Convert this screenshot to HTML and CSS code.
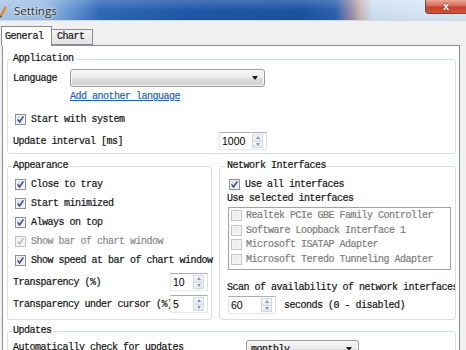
FILE: index.html
```html
<!DOCTYPE html>
<html>
<head>
<meta charset="utf-8">
<title>Settings</title>
<link rel="stylesheet" href="styles.css">
</head>
<body>
<div class="titlebar">
  <svg class="appicon" width="7" height="14" viewBox="0 0 7 14"><path d="M0 11 L4.5 2 L7 3.2 L2.2 12.5 Z" fill="#e58a2a"/><path d="M0 11 L2.2 12.5 L0 14 Z" fill="#5b5b5b"/></svg>
  <span class="title">Settings</span>
  <div class="close">x</div>
</div>
<div class="tabs">
  <div class="tab active">General</div>
  <div class="tab">Chart</div>
</div>
<div class="panel">
  <fieldset class="group app">
    <legend>Application</legend>
    <div class="row lang">
      <span class="lbl-lang">Language</span>
      <div class="combo lang-combo"><span class="arrow"></span></div>
    </div>
    <a class="link">Add another language</a>
    <div class="check start"><span class="cb"><svg width="9" height="9" viewBox="0 0 9 9"><path d="M1.6 4.4 L3.6 7 L7.4 1.4" fill="none" stroke="#34498c" stroke-width="1.5"/></svg></span>Start with system</div>
    <div class="row interval">
      <span class="lbl-interval">Update interval [ms]</span>
      <div class="spin w48"><span class="val">1000</span><span class="btns"><span class="up"></span><span class="dn"></span></span></div>
    </div>
  </fieldset>
  <div class="cols">
    <fieldset class="group appear">
      <legend>Appearance</legend>
      <div class="checks">
        <div class="check tall"><span class="cb"><svg width="9" height="9" viewBox="0 0 9 9"><path d="M1.6 4.4 L3.6 7 L7.4 1.4" fill="none" stroke="#34498c" stroke-width="1.5"/></svg></span>Close to tray</div>
        <div class="check tall"><span class="cb"><svg width="9" height="9" viewBox="0 0 9 9"><path d="M1.6 4.4 L3.6 7 L7.4 1.4" fill="none" stroke="#34498c" stroke-width="1.5"/></svg></span>Start minimized</div>
        <div class="check tall"><span class="cb"><svg width="9" height="9" viewBox="0 0 9 9"><path d="M1.6 4.4 L3.6 7 L7.4 1.4" fill="none" stroke="#34498c" stroke-width="1.5"/></svg></span>Always on top</div>
        <div class="check tall disabled"><span class="cb"><svg width="9" height="9" viewBox="0 0 9 9"><path d="M1.6 4.4 L3.6 7 L7.4 1.4" fill="none" stroke="#b4b4b4" stroke-width="1.3"/></svg></span>Show bar of chart window</div>
        <div class="check tall"><span class="cb"><svg width="9" height="9" viewBox="0 0 9 9"><path d="M1.6 4.4 L3.6 7 L7.4 1.4" fill="none" stroke="#34498c" stroke-width="1.5"/></svg></span>Show speed at bar of chart window</div>
      </div>
      <div class="row trans first">
        <span class="lbl-trans">Transparency (%)</span>
        <div class="spin w38"><span class="val">10</span><span class="btns"><span class="up"></span><span class="dn"></span></span></div>
      </div>
      <div class="row trans second">
        <span class="lbl-trans">Transparency under cursor (%)</span>
        <div class="spin w38"><span class="val">5</span><span class="btns"><span class="up"></span><span class="dn"></span></span></div>
      </div>
    </fieldset>
    <fieldset class="group net">
      <legend>Network Interfaces</legend>
      <div class="check all"><span class="cb"><svg width="9" height="9" viewBox="0 0 9 9"><path d="M1.6 4.4 L3.6 7 L7.4 1.4" fill="none" stroke="#34498c" stroke-width="1.5"/></svg></span>Use all interfaces</div>
      <div class="plain sel">Use selected interfaces</div>
      <div class="listbox">
        <div class="item"><span class="cb off"></span>Realtek PCIe GBE Family Controller</div>
        <div class="item"><span class="cb off"></span>Software Loopback Interface 1</div>
        <div class="item"><span class="cb off"></span>Microsoft ISATAP Adapter</div>
        <div class="item"><span class="cb off"></span>Microsoft Teredo Tunneling Adapter</div>
      </div>
      <div class="plain scan">Scan of availability of network interfaces</div>
      <div class="row secs">
        <div class="spin w48"><span class="val">60</span><span class="btns"><span class="up"></span><span class="dn"></span></span></div>
        <span class="lbl-secs">seconds (0 - disabled)</span>
      </div>
    </fieldset>
  </div>
  <fieldset class="group updates">
    <legend>Updates</legend>
    <div class="row upd">
      <span class="lbl-upd">Automatically check for updates</span>
      <div class="combo upd-combo"><span class="cval">monthly</span><span class="arrow"></span></div>
    </div>
  </fieldset>
</div>
</body>
</html>
```

FILE: styles.css
```css
html, body {
  margin: 0;
  padding: 0;
}
body {
  width: 466px;
  height: 350px;
  overflow: hidden;
  background: #f0f0f0;
  font-family: "Liberation Mono", "DejaVu Sans Mono", monospace;
  font-size: 10px;
  letter-spacing: -0.5px;
  color: #141414;
  -webkit-text-stroke: 0.2px #141414;
}

/* title bar */
.titlebar {
  height: 20px;
  display: flex;
  align-items: center;
  border-bottom: 1px solid #cfdbe8;
  background:
    linear-gradient(to bottom, rgba(255,255,255,0.18), rgba(255,255,255,0) 55%, rgba(0,0,0,0.04)),
    linear-gradient(to right, #a9c7e8 0, #9cbee4 40px, #6a9bd4 68px, #3069b8 100px, #1f57a7 190px, #1c52a2 300px, #2a60ad 335px, #9c8ea6 352px, #c7b7b5 360px, #cfdff1 372px, #d6e6f5 420px, #dbe8f5 466px);
}
.appicon {
  flex: none;
  display: block;
  margin-top: 2px;
}
.title {
  margin-left: 7px;
  font-family: "Open Sans", "Liberation Sans", sans-serif;
  font-size: 11.5px;
  letter-spacing: 0;
  color: #2a2a2a;
  -webkit-text-stroke: 0;
  text-shadow: 0 0 5px rgba(255,255,255,0.95), 0 0 2px rgba(255,255,255,0.9);
}
.close {
  margin-left: auto;
  align-self: flex-start;
  width: 41px;
  height: 14px;
  box-sizing: border-box;
  border: 1px solid #8a3a2e;
  border-top: 0;
  border-right: 0;
  border-radius: 0 0 0 4px;
  background: linear-gradient(#eaa898, #d86a56 45%, #c4412c 55%, #cf573f);
  color: #fff;
  font-family: "Liberation Sans", sans-serif;
  font-weight: bold;
  font-size: 11px;
  letter-spacing: 0;
  -webkit-text-stroke: 0;
  line-height: 12px;
  text-align: center;
  text-shadow: 0 0 2px #7a2418;
}

/* tabs */
.tabs {
  display: flex;
  align-items: flex-end;
  height: 19px;
  margin-top: 5px;
  padding-left: 1px;
}
.tab {
  box-sizing: border-box;
  height: 16px;
  width: 41px;
  padding-left: 5px;
  line-height: 14px;
  border: 1px solid #898c95;
  border-left: 0;
  background: linear-gradient(#f3f3f3, #e4e4e4);
}
.tab.active {
  position: relative;
  z-index: 2;
  height: 20px;
  width: 51px;
  padding-left: 3px;
  line-height: 19px;
  margin-bottom: -1px;
  border-left: 1px solid #898c95;
  border-bottom: 0;
  background: #fff;
}

/* panel */
.panel {
  margin-left: 2px;
  width: 458px;
  height: 320px;
  box-sizing: border-box;
  border: 1px solid #898c95;
  background: #fff;
  padding: 7px 3px 0 4px;
}

.group {
  margin: 0;
  min-width: 0;
  border: 1px solid #d5dfe5;
  border-radius: 3px;
  padding: 0 3px 3px 5px;
}
.group legend {
  padding: 0 1px;
  margin-left: -1px;
  line-height: 12px;
  height: 12px;
}

.row {
  display: flex;
  align-items: center;
}

/* application */
.lang {
  margin-top: 4px;
  height: 18px;
}
.lbl-lang {
  width: 57px;
  flex: none;
}
.combo {
  box-sizing: border-box;
  height: 18px;
  display: flex;
  align-items: center;
  border: 1px solid #9a9a9a;
  border-radius: 3px;
  background: linear-gradient(#f4f4f4 0%, #ececec 48%, #dedede 52%, #d2d2d2 100%);
  box-shadow: inset 0 0 0 1px rgba(255,255,255,0.7);
}
.lang-combo {
  width: 195px;
}
.arrow {
  margin-left: auto;
  margin-right: 6px;
  width: 0;
  height: 0;
  border-left: 3.5px solid transparent;
  border-right: 3.5px solid transparent;
  border-top: 4px solid #1a1a1a;
}
.link {
  display: block;
  width: fit-content;
  margin-top: 4px;
  margin-left: 57px;
  line-height: 12px;
  color: #1f5fc8;
  -webkit-text-stroke: 0.2px #1f5fc8;
  text-decoration: underline;
}
.check {
  display: flex;
  align-items: center;
  height: 14px;
  white-space: nowrap;
}
.check .cb {
  margin-left: 2px;
  margin-right: 5px;
}
.start {
  margin-top: 9px;
}
.interval {
  margin-top: 6px;
  height: 18px;
}
.lbl-interval {
  width: 206px;
  flex: none;
}

/* checkbox */
.cb {
  flex: none;
  display: flex;
  align-items: center;
  justify-content: center;
  width: 11px;
  height: 11px;
  box-sizing: border-box;
  border: 1px solid #8e8f8f;
  background: linear-gradient(135deg, #d3d7dd, #f9f9f9);
  box-shadow: inset 0 0 0 1px #f4f4f4;
}
.cb svg {
  display: block;
}
.disabled {
  color: #8a8a8a;
  -webkit-text-stroke: 0.2px #8a8a8a;
}
.disabled .cb {
  border-color: #c2c2c2;
  background: #f4f4f4;
}

/* spin */
.spin {
  flex: none;
  box-sizing: border-box;
  height: 18px;
  display: flex;
  align-items: stretch;
  border: 1px solid #abadb3;
  border-color: #abadb3 #dbdfe6 #e3e9ef #e2e3ea;
  background: #fff;
}
.w48 { width: 48px; }
.w38 { width: 38px; }
.val {
  flex: 1;
  padding-left: 2px;
  font-family: "Liberation Sans", Arial, sans-serif;
  font-size: 10.5px;
  letter-spacing: 0;
  -webkit-text-stroke: 0;
  color: #000;
  line-height: 16px;
}
.btns {
  flex: none;
  width: 11px;
  margin: 1px 3px 1px 0;
  display: flex;
  flex-direction: column;
}
.btns span {
  flex: 1;
  box-sizing: border-box;
  border: 1px solid #d3dae4;
  background: linear-gradient(#f6f8fb, #e3e9f1);
  display: flex;
  align-items: center;
  justify-content: center;
}
.btns .up { border-bottom: 0; }
.btns .up::after {
  content: "";
  border-left: 2.5px solid transparent;
  border-right: 2.5px solid transparent;
  border-bottom: 3px solid #8a97ab;
}
.btns .dn::after {
  content: "";
  border-left: 2.5px solid transparent;
  border-right: 2.5px solid transparent;
  border-top: 3px solid #8a97ab;
}

/* columns */
.cols {
  display: flex;
  gap: 7px;
  margin-top: 6px;
}
.appear {
  width: 205px;
  flex: none;
  box-sizing: border-box;
  padding-bottom: 6px;
}
.checks {
  margin-top: 3px;
}
.check.tall {
  height: 19px;
}
.trans {
  height: 18px;
}
.trans.first { margin-top: 3px; }
.trans.second { margin-top: 4px; }
.lbl-trans {
  flex: 1;
  min-width: 0;
  overflow: hidden;
  white-space: nowrap;
}

.net {
  flex: 1;
  padding-left: 7px;
  padding-right: 0;
}
.check.all {
  margin-top: 5px;
}
.plain {
  line-height: 12px;
  white-space: nowrap;
  overflow: hidden;
}
.sel {
  margin-top: 2px;
}
.listbox {
  margin-top: 2px;
  margin-left: 1px;
  width: 223px;
  height: 63px;
  box-sizing: border-box;
  border: 1px solid #a3a3a3;
  background: #fff;
}
.item {
  height: 14.7px;
  display: flex;
  align-items: center;
  white-space: nowrap;
  color: #7c7c7c;
  -webkit-text-stroke: 0.2px #7c7c7c;
}
.item .cb {
  margin-left: 2px;
  margin-right: 4px;
}
.cb.off {
  border-color: #c4c4c4;
  background: linear-gradient(135deg, #e6e6e6, #f8f8f8);
}
.scan {
  margin-top: 12px;
}
.secs {
  margin-top: 2px;
  margin-left: 1px;
  height: 18px;
}
.lbl-secs {
  margin-left: 8px;
  white-space: nowrap;
}

/* updates */
.updates {
  margin-top: 5px;
}
.upd {
  margin-top: 3px;
  height: 18px;
}
.lbl-upd {
  width: 233px;
  flex: none;
  white-space: nowrap;
  align-self: flex-start;
  margin-top: 2px;
}
.upd-combo {
  width: 113px;
}
.cval {
  padding-left: 4px;
}
```
